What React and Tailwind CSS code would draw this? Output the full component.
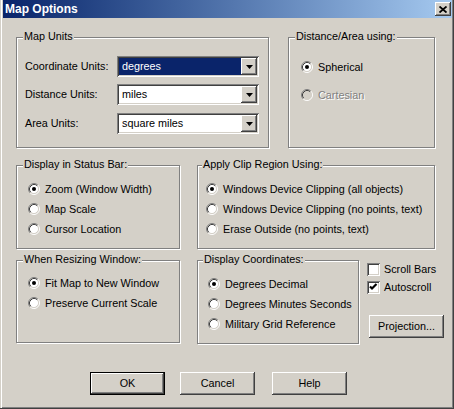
const raised =
  'shadow-[inset_-1px_-1px_0_#404040,inset_1px_1px_0_#fff,inset_-2px_-2px_0_#808080,inset_2px_2px_0_#d4d0c8]';
const sunken =
  'shadow-[inset_1px_1px_0_#808080,inset_-1px_-1px_0_#fff,inset_2px_2px_0_#404040,inset_-2px_-2px_0_#d4d0c8]';

function Group({ title, titleLeft, className, children }) {
  return (
    <div className={`relative border border-[#808080] shadow-[inset_1px_1px_0_#fff,1px_1px_0_#fff] ${className}`}>
      <span className={`absolute top-[-8px] leading-[13px] px-[1px] bg-[#d4d0c8] whitespace-nowrap ${titleLeft}`}>
        {title}
      </span>
      {children}
    </div>
  );
}

function Radio({ checked, disabled, label }) {
  return (
    <div className="flex items-center h-[20px]">
      <svg width="12" height="12" viewBox="0 0 12 12" className="shrink-0">
        <circle cx="6" cy="6" r="4.5" fill={disabled ? '#d4d0c8' : '#fff'} />
        <path d="M2.11 9.89A5.5 5.5 0 0 1 9.89 2.11" fill="none" stroke="#808080" />
        <path d="M9.89 2.11A5.5 5.5 0 0 1 2.11 9.89" fill="none" stroke="#fff" />
        <path d="M2.82 9.18A4.5 4.5 0 0 1 9.18 2.82" fill="none" stroke="#404040" />
        <path d="M9.18 2.82A4.5 4.5 0 0 1 2.82 9.18" fill="none" stroke="#d4d0c8" />
        {checked && <circle cx="6" cy="6" r="2" fill="#000" />}
      </svg>
      <span
        className={`ml-[5px] whitespace-nowrap ${
          disabled ? 'text-[#808080] [text-shadow:1px_1px_0_#fff]' : ''
        }`}
      >
        {label}
      </span>
    </div>
  );
}

function Check({ checked, label }) {
  return (
    <div className="flex items-center h-[13px]">
      <div className={`w-[13px] h-[13px] bg-white flex items-center justify-center ${sunken}`}>
        {checked && (
          <svg width="9" height="9" viewBox="0 0 9 9">
            <path d="M1 3.5L3 5.5L7.5 1" fill="none" stroke="#000" strokeWidth="2.2" />
          </svg>
        )}
      </div>
      <span className="ml-[4px] whitespace-nowrap">{label}</span>
    </div>
  );
}

function Combo({ value, selected, className = '' }) {
  return (
    <div className={`w-[142px] h-[21px] p-[2px] bg-white flex ${sunken} ${className}`}>
      <div className={`flex-1 flex items-center pl-[3px] ${selected ? 'bg-[#0a246a] text-white' : ''}`}>
        {value}
      </div>
      <div className={`w-[16px] h-[17px] bg-[#d4d0c8] flex items-center justify-center ${raised}`}>
        <svg width="7" height="4" viewBox="0 0 7 4">
          <polygon points="0,0 7,0 3.5,4" fill="#000" />
        </svg>
      </div>
    </div>
  );
}

function Button({ label, def, className = '' }) {
  return (
    <div
      className={`w-[75px] h-[23px] flex items-center justify-center bg-[#d4d0c8] ${raised} ${
        def ? 'border border-black' : ''
      } ${className}`}
    >
      {label}
    </div>
  );
}

function FormRow({ label, children, className = '' }) {
  return (
    <div className={`flex items-center h-[21px] ${className}`}>
      <div className="w-[100px] pl-[8px] whitespace-nowrap">{label}</div>
      {children}
    </div>
  );
}

export default function App() {
  return (
    <div className="w-[454px] h-[409px] bg-[#d4d0c8] border-r border-b border-[#404040] shadow-[inset_1px_0_0_#d4d0c8,inset_2px_0_0_#fff,inset_-1px_-1px_0_#808080] overflow-hidden font-['Liberation_Sans',Arial,sans-serif] text-[10.8px] text-black">
      <div className="ml-[3px] w-[449px] h-[18px] bg-linear-to-r from-[#0a246a] to-[#a6caf0] flex items-center justify-between">
        <span className="pl-[2px] text-white font-bold text-[12px]">Map Options</span>
        <div className={`mr-[1px] w-[16px] h-[14px] bg-[#d4d0c8] flex items-center justify-center ${raised}`}>
          <svg width="8" height="7" viewBox="0 0 8 7">
            <path d="M0.5 0.5L7.5 6.5M7.5 0.5L0.5 6.5" stroke="#000" strokeWidth="1.8" />
          </svg>
        </div>
      </div>

      <div className="pl-[16px] pt-[19px]">
        <div className="flex">
          <Group title="Map Units" titleLeft="left-[6px]" className="w-[253px] h-[111px] pt-[18px]">
            <FormRow label="Coordinate Units:">
              <Combo value="degrees" selected />
            </FormRow>
            <FormRow label="Distance Units:" className="mt-[7px]">
              <Combo value="miles" />
            </FormRow>
            <FormRow label="Area Units:" className="mt-[8px]">
              <Combo value="square miles" />
            </FormRow>
          </Group>
          <Group
            title="Distance/Area using:"
            titleLeft="left-[6px]"
            className="ml-[19px] w-[147px] h-[111px] pt-[19px] pl-[12px]"
          >
            <Radio checked label="Spherical" />
            <div className="mt-[8px]">
              <Radio disabled label="Cartesian" />
            </div>
          </Group>
        </div>

        <div className="flex mt-[17px]">
          <Group
            title="Display in Status Bar:"
            titleLeft="left-[6px]"
            className="w-[164px] h-[84px] pt-[13px] pl-[11px]"
          >
            <Radio checked label="Zoom (Window Width)" />
            <Radio label="Map Scale" />
            <Radio label="Cursor Location" />
          </Group>
          <Group
            title="Apply Clip Region Using:"
            titleLeft="left-[4px]"
            className="ml-[17px] w-[238px] h-[84px] pt-[13px] pl-[8px]"
          >
            <Radio checked label="Windows Device Clipping (all objects)" />
            <Radio label="Windows Device Clipping (no points, text)" />
            <Radio label="Erase Outside (no points, text)" />
          </Group>
        </div>

        <div className="flex mt-[11px]">
          <Group
            title="When Resizing Window:"
            titleLeft="left-[6px]"
            className="w-[164px] h-[83px] pt-[12px] pl-[11px]"
          >
            <Radio checked label="Fit Map to New Window" />
            <Radio label="Preserve Current Scale" />
          </Group>
          <Group
            title="Display Coordinates:"
            titleLeft="left-[5px]"
            className="ml-[17px] w-[162px] h-[84px] pt-[13px] pl-[10px]"
          >
            <Radio checked label="Degrees Decimal" />
            <Radio label="Degrees Minutes Seconds" />
            <Radio label="Military Grid Reference" />
          </Group>
          <div className="ml-[8px] pt-[3px] flex flex-col">
            <Check label="Scroll Bars" />
            <div className="mt-[5px]">
              <Check checked label="Autoscroll" />
            </div>
            <Button label="Projection..." className="mt-[21px] ml-[2px]" />
          </div>
        </div>

        <div className="flex mt-[28px] pl-[74px]">
          <Button def label="OK" />
          <Button label="Cancel" className="ml-[15px]" />
          <Button label="Help" className="ml-[17px]" />
        </div>
      </div>
    </div>
  );
}
